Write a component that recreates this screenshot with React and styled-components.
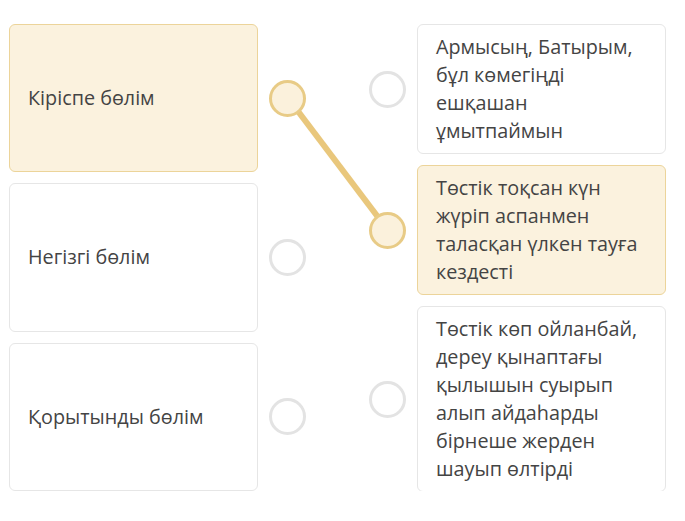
import React from "react";
import styled, { createGlobalStyle } from "styled-components";

const Global = createGlobalStyle`
  body {
    margin: 0;
    background: #ffffff;
    font-family: "Open Sans", "Noto Sans", sans-serif;
  }
`;

const Board = styled.div`
  position: relative;
  display: flex;
  gap: 63px;
  width: 657px;
  height: 467px;
  padding: 24px 0 0 9px;
`;

const Column = styled.div`
  display: flex;
  flex-direction: column;
  gap: 11px;
  width: 297px;
`;

const Row = styled.div`
  display: flex;
  flex-direction: ${(p) => (p.$side === "right" ? "row-reverse" : "row")};
  align-items: center;
  gap: 11px;
  flex: ${(p) => (p.$grow ? "1 1 0" : "0 0 auto")};
`;

const Card = styled.div`
  box-sizing: border-box;
  width: 250px;
  align-self: stretch;
  display: flex;
  align-items: center;
  padding: 8px 18px;
  border-radius: 6px;
  border: 1px solid ${(p) => (p.$active ? "#ecd49a" : "#e6e6e6")};
  background: ${(p) => (p.$active ? "#fbf2de" : "#ffffff")};
  color: #444444;
  font-size: 19.8px;
  line-height: 28px;
`;

const Dot = styled.div`
  box-sizing: border-box;
  flex: 0 0 auto;
  width: 37px;
  height: 37px;
  border-radius: 50%;
  border: 3px solid ${(p) => (p.$active ? "#e8cb86" : "#e3e3e3")};
  background: ${(p) => (p.$active ? "#fbf1dc" : "#ffffff")};
  position: relative;
  z-index: 2;
`;

const Link = styled.svg`
  position: absolute;
  left: 0;
  top: 0;
  z-index: 1;
  pointer-events: none;
`;

const left = [
  { text: "Кіріспе бөлім", active: true },
  { text: "Негізгі бөлім" },
  { text: "Қорытынды бөлім" },
];

const right = [
  { text: "Армысың, Батырым, бұл көмегіңді ешқашан ұмытпаймын" },
  { text: "Төстік тоқсан күн жүріп аспанмен таласқан үлкен тауға кездесті", active: true },
  { text: "Төстік көп ойланбай, дереу қынаптағы қылышын суырып алып айдаһарды бірнеше жерден шауып өлтірді", grow: true },
];

export default function App() {
  return (
    <>
      <Global />
      <Board>
        <Link width="685" height="521">
          <line x1="288" y1="98" x2="387" y2="229" stroke="#e9c77c" strokeWidth="6" />
        </Link>
        <Column>
          {left.map((item) => (
            <Row key={item.text} $grow>
              <Card $active={item.active}>{item.text}</Card>
              <Dot $active={item.active} />
            </Row>
          ))}
        </Column>
        <Column>
          {right.map((item) => (
            <Row key={item.text} $side="right" $grow={item.grow}>
              <Card $active={item.active}>{item.text}</Card>
              <Dot $active={item.active} />
            </Row>
          ))}
        </Column>
      </Board>
    </>
  );
}
